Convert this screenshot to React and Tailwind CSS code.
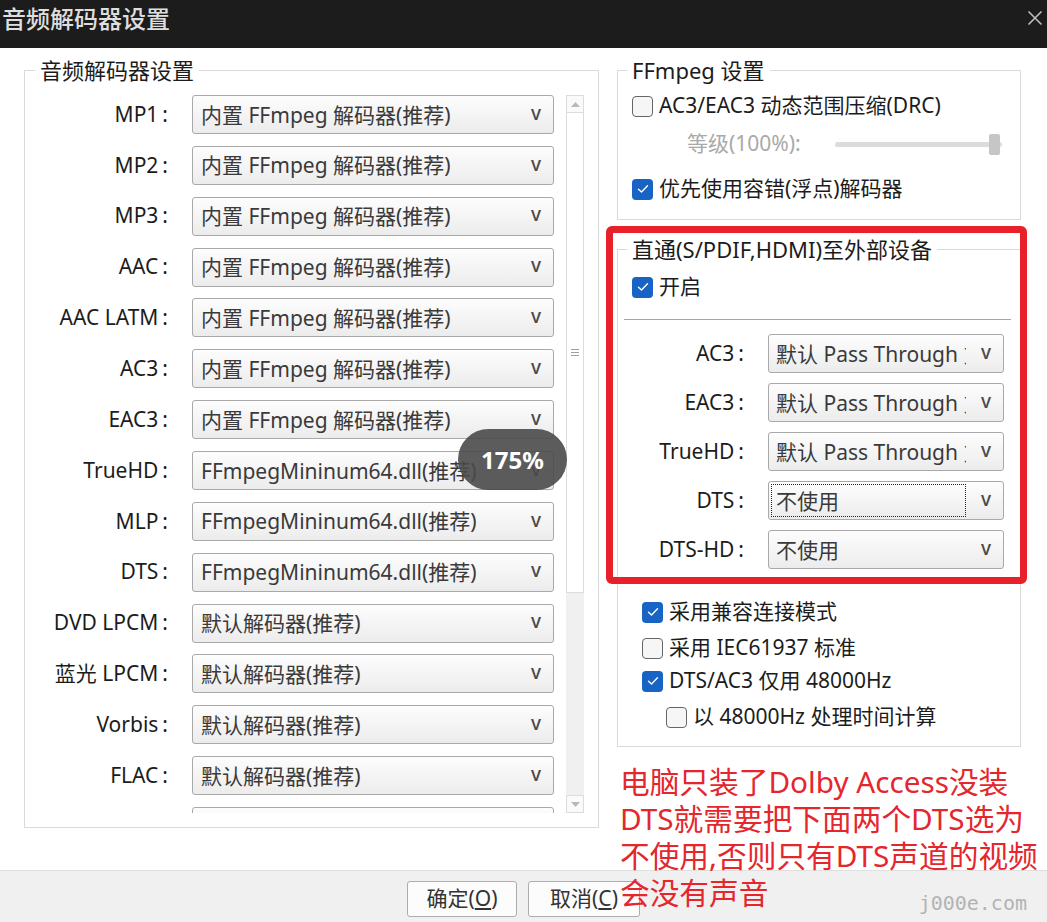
import React from 'react'

// Audio decoder settings dialog (175% scaled Windows dialog) with annotation overlay.
const FONT = "font-['Noto_Sans','Noto_Sans_CJK_SC',sans-serif]"

const BUILTIN = '内置 FFmpeg 解码器(推荐)'
const MININUM = 'FFmpegMininum64.dll(推荐)'
const DEFAULT = '默认解码器(推荐)'

const leftRows = [
  ['MP1', BUILTIN],
  ['MP2', BUILTIN],
  ['MP3', BUILTIN],
  ['AAC', BUILTIN],
  ['AAC LATM', BUILTIN],
  ['AC3', BUILTIN],
  ['EAC3', BUILTIN],
  ['TrueHD', MININUM],
  ['MLP', MININUM],
  ['DTS', MININUM],
  ['DVD LPCM', DEFAULT],
  ['蓝光 LPCM', DEFAULT],
  ['Vorbis', DEFAULT],
  ['FLAC', DEFAULT],
  ['', ''],
]

const passRows = [
  ['AC3', '默认 Pass Through 方式', false],
  ['EAC3', '默认 Pass Through 方式', false],
  ['TrueHD', '默认 Pass Through 方式', false],
  ['DTS', '不使用', true],
  ['DTS-HD', '不使用', false],
]

function Label({ text, className }) {
  if (!text) return <div className={className} />
  return (
    <div className={`${className} whitespace-nowrap text-right text-[21px] text-[#1c1c1c]`}>
      {text}
      <span className="ml-[4px]">:</span>
    </div>
  )
}

function Select({ text, className, textClass, focused = false }) {
  return (
    <div
      className={`relative flex h-[39px] shrink-0 items-center rounded-[3px] border border-[#a9a9a9] bg-linear-to-b from-[#fdfdfd] to-[#ececec] ${className}`}
    >
      <div className={`overflow-hidden whitespace-nowrap text-[21px] leading-[28px] text-[#3a3a3a] ${textClass}`}>
        {text}
      </div>
      <span className="ml-auto mr-[12px] pb-[3px] text-[19px] font-medium text-[#4a4a4a]">v</span>
      {focused && (
        <div className="absolute left-[2px] top-[2px] h-[33px] w-[195px] border border-dotted border-[#222]" />
      )}
    </div>
  )
}

function Check({ checked }) {
  if (checked) {
    return (
      <span className="flex h-[21px] w-[21px] shrink-0 items-center justify-center rounded-[4px] bg-[#1764c4]">
        <svg width="12" height="10" viewBox="0 0 12 10" fill="none">
          <path d="M1.5 5.2 4.5 8 10.5 1.8" stroke="#fff" strokeWidth="1.4" strokeLinecap="round" strokeLinejoin="round" />
        </svg>
      </span>
    )
  }
  return (
    <span className="h-[21px] w-[21px] shrink-0 rounded-[4px] border-[1.5px] border-[#666] bg-[#f6f6f6]" />
  )
}

function CheckRow({ checked, children, className = '' }) {
  return (
    <div className={`flex h-[22px] items-center ${className}`}>
      <Check checked={checked} />
      <span className="ml-[6px] whitespace-nowrap text-[21px] text-[#1c1c1c]">{children}</span>
    </div>
  )
}

function Scrollbar() {
  return (
    <div className="flex h-full w-[18px] shrink-0 flex-col">
      <div className="flex h-[18px] items-center justify-center border border-[#dcdcdc] bg-[#fafafa]">
        <svg width="9" height="5" viewBox="0 0 9 5">
          <path d="M0 5 4.5 0 9 5Z" fill="#b8b8b8" />
        </svg>
      </div>
      <div className="flex h-[480px] items-center justify-center border-x border-b border-[#dcdcdc] bg-white">
        <div className="flex flex-col gap-[2px]">
          <div className="h-px w-[8px] bg-[#a0a0a0]" />
          <div className="h-px w-[8px] bg-[#a0a0a0]" />
          <div className="h-px w-[8px] bg-[#a0a0a0]" />
        </div>
      </div>
      <div className="flex-1 bg-[#f0f0f0]" />
      <div className="flex h-[18px] items-center justify-center border border-[#dcdcdc] bg-[#fafafa]">
        <svg width="9" height="5" viewBox="0 0 9 5">
          <path d="M0 0 4.5 5 9 0Z" fill="#b8b8b8" />
        </svg>
      </div>
    </div>
  )
}

function Legend({ children, className = '' }) {
  return (
    <legend className={`px-[5px] text-[22px] leading-[26px] text-[#1c1c1c] ${className}`}>{children}</legend>
  )
}

export default function App() {
  return (
    <div className={`relative flex h-[922px] w-[1047px] flex-col overflow-hidden bg-white ${FONT}`}>
      {/* title bar */}
      <div className="flex h-[48px] shrink-0 items-center bg-[#1c1c1c] pl-[2px] pr-[4px]">
        <span className="pb-[10px] text-[24px] font-medium text-[#dedede]">音频解码器设置</span>
        <svg className="mb-[12px] ml-auto" width="16" height="16" viewBox="0 0 16 16">
          <path d="M1.5 1.5 14.5 14.5M14.5 1.5 1.5 14.5" stroke="#bdbdbd" strokeWidth="1.6" />
        </svg>
      </div>

      {/* body */}
      <div className="flex h-[822px] shrink-0 pl-[24px]">
        <fieldset className="mt-[9px] flex h-[771px] w-[575px] shrink-0 border border-[#dadada] pb-[14px] pl-[10px] pr-[12px] pt-[12px]">
          <Legend className="px-[4px]">音频解码器设置</Legend>
          <div className="flex h-[718px] w-full overflow-hidden">
            <div className="flex flex-col gap-[11.86px]">
              {leftRows.map(([label, value], i) => (
                <div key={i} className="flex h-[39px] shrink-0 items-center">
                  <Label text={label} className="w-[133px] shrink-0" />
                  <Select text={value} className="ml-[24px] w-[362px]" textClass="pl-[8px]" />
                </div>
              ))}
            </div>
            <div className="ml-[12px] h-full">
              <Scrollbar />
            </div>
          </div>
        </fieldset>

        <div className="ml-[18px] flex w-[404px] shrink-0 flex-col">
          <fieldset className="mt-[9px] border border-[#dadada] pb-[19px] pl-[9px]">
            <Legend>FFmpeg 设置</Legend>
            <CheckRow checked={false} className="ml-[5px] mt-[13px] !h-[20px]">
              AC3/EAC3 动态范围压缩(DRC)
            </CheckRow>
            <div className="mt-[17px] flex h-[22px] items-center pl-[60px]">
              <span className="w-[148px] shrink-0 text-[21px] text-[#a9a9a9]">等级(100%):</span>
              <div className="relative h-[5px] w-[167px] rounded-full bg-[#dcdcdc]">
                <div className="absolute right-[2px] top-[-8px] h-[21px] w-[11px] rounded-[2px] bg-[#c6c6c6]" />
              </div>
            </div>
            <CheckRow checked className="ml-[5px] mt-[23px]">
              优先使用容错(浮点)解码器
            </CheckRow>
          </fieldset>

          <fieldset className="mt-[16px] border border-[#dadada] pb-[18px] pl-[9px]">
            <Legend>直通(S/PDIF,HDMI)至外部设备</Legend>
            <CheckRow checked className="ml-[5px] mt-[15px] !h-[20px]">
              开启
            </CheckRow>
            <div className="ml-[-3px] mt-[22px] h-px w-[387px] bg-[#a6a6a6]" />
            <div className="mt-[14px] flex flex-col gap-[10px]">
              {passRows.map(([label, value, focused]) => (
                <div key={label} className="flex h-[39px] items-center">
                  <Label text={label} className="w-[117px] shrink-0" />
                  <Select
                    text={value}
                    focused={focused}
                    className="ml-[24px] w-[236px]"
                    textClass="ml-[7px] w-[190px]"
                  />
                </div>
              ))}
            </div>
            <div className="pl-[15px]">
              <CheckRow checked className="mt-[32px]">采用兼容连接模式</CheckRow>
              <CheckRow checked={false} className="mt-[14px]">采用 IEC61937 标准</CheckRow>
              <CheckRow checked className="mt-[11px]">DTS/AC3 仅用 48000Hz</CheckRow>
              <CheckRow checked={false} className="ml-[24px] mt-[14px]">以 48000Hz 处理时间计算</CheckRow>
            </div>
          </fieldset>

          <div className="relative z-10 mt-[16px] pl-[3px] text-[29.7px] leading-[37px] text-[#e5262d]">
            <div className="whitespace-nowrap">电脑只装了Dolby Access没装</div>
            <div className="whitespace-nowrap">DTS就需要把下面两个DTS选为</div>
            <div className="whitespace-nowrap">不使用,否则只有DTS声道的视频</div>
            <div className="whitespace-nowrap">会没有声音</div>
          </div>
        </div>
      </div>

      {/* bottom button bar */}
      <div className="flex h-[52px] shrink-0 border-t border-[#dfdfdf] bg-[#f0f0f0] pl-[407px] pt-[10px]">
        <button className="h-[36px] w-[110px] rounded-[3px] border border-[#adadad] bg-[#fcfcfc] text-[21px] text-[#333]">
          确定(<span className="underline underline-offset-2">O</span>)
        </button>
        <button className="ml-[11px] h-[36px] w-[112px] rounded-[3px] border border-[#adadad] bg-[#fcfcfc] text-[21px] text-[#333]">
          取消(<span className="underline underline-offset-2">C</span>)
        </button>
        <span className="ml-auto mr-[20px] mt-[7px] font-['DejaVu_Sans_Mono',monospace] text-[20px] text-[#b3b3b3]">
          j000e.com
        </span>
      </div>

      {/* annotation: red highlight box */}
      <div className="pointer-events-none absolute left-[606px] top-[226px] h-[358px] w-[421px] rounded-[6px] border-[7px] border-[#e8202a]" />

      {/* zoom level badge */}
      <div className="absolute left-[458px] top-[429px] flex h-[61px] w-[109px] items-center justify-center rounded-full bg-[#4a4a4a]/90 text-[24px] font-bold text-white">
        175%
      </div>
    </div>
  )
}
